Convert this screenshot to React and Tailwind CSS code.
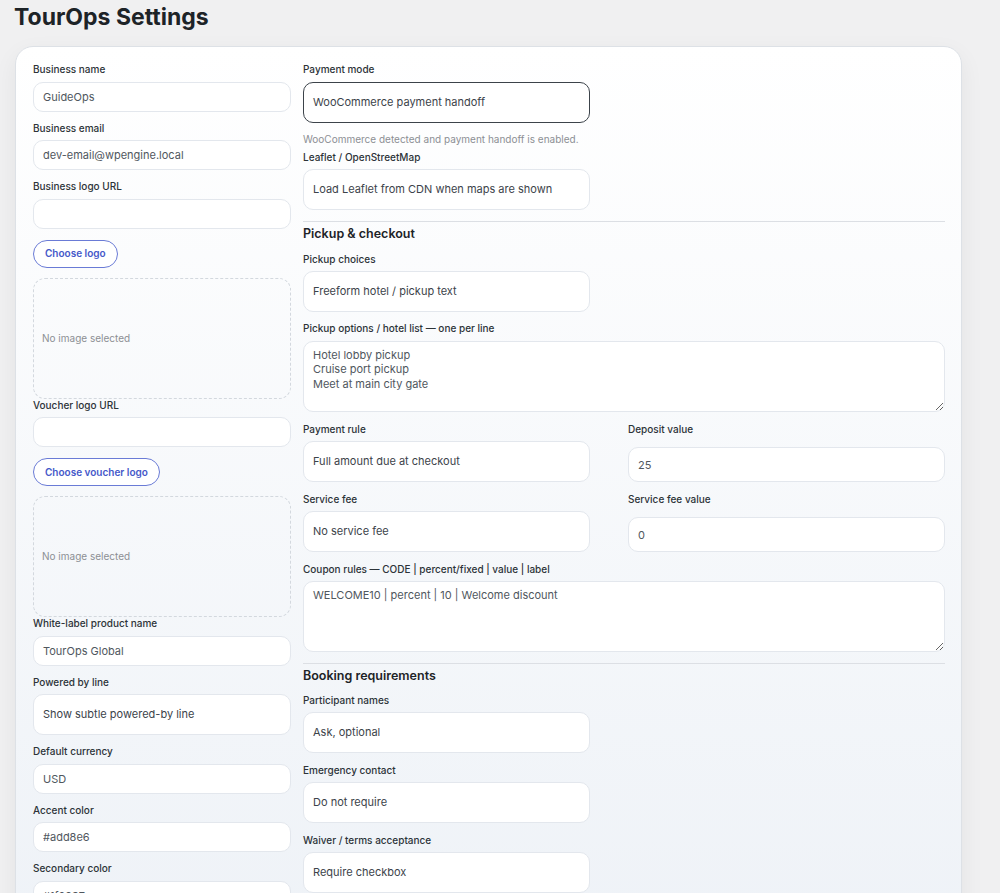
import clsx from 'clsx';

const FONT = "font-['Inter',sans-serif]";

const LEFT_ROWS = [
  { label: 'Business name', value: 'GuideOps' },
  { label: 'Business email', value: 'dev-email@wpengine.local' },
  { label: 'Business logo URL', value: '' },
];

function Label({ children, className }) {
  return (
    <label className={clsx('block h-[13px] text-[10px] leading-[13px] font-medium text-[#2c3338] mb-[5.5px] whitespace-nowrap', className)}>
      {children}
    </label>
  );
}

function TextInput({ value, className }) {
  return (
    <input
      readOnly
      value={value}
      className={clsx(
        'block w-full h-[30px] rounded-[10px] border border-[#e3e7ed] bg-white px-[9px] text-[11px] text-[#50575e] outline-none',
        className
      )}
    />
  );
}

function Select({ value, wide = false, active = false, className }) {
  return (
    <div
      className={clsx(
        'flex items-center h-[41px] rounded-[10px] border bg-white px-[9px] text-[11px] text-[#3c434a]',
        wide ? 'w-full' : 'w-[287px]',
        active ? 'border-[#3c434a]' : 'border-[#e3e7ed]',
        className
      )}
    >
      {value}
    </div>
  );
}

function TextArea({ value, className }) {
  return (
    <textarea
      readOnly
      value={value}
      className={clsx(
        'block w-full h-[71px] rounded-[10px] border border-[#e3e7ed] bg-white px-[9px] py-[6px] text-[11px] leading-[14.5px] text-[#50575e] outline-none',
        className
      )}
    />
  );
}

function LogoPicker({ button }) {
  return (
    <>
      <button className="self-start h-[28px] mt-[1px] px-[11px] rounded-full border border-[#6a7bd6] bg-white text-[10px] font-semibold text-[#4558c9]">
        {button}
      </button>
      <div className="mt-[10px] h-[121px] rounded-[12px] border border-dashed border-[#d3d8de] flex items-center px-[8px] text-[10px] text-[#8c8f94]">
        No image selected
      </div>
    </>
  );
}

function SectionTitle({ children }) {
  return (
    <>
      <div className="h-px bg-[#dcdfe4]" />
      <h2 className="mt-[4px] h-[16px] text-[12.5px] leading-[16px] font-semibold text-[#1d2327]">{children}</h2>
    </>
  );
}

function Field({ label, children }) {
  return (
    <div className="mb-[10px]">
      <Label>{label}</Label>
      {children}
    </div>
  );
}

export default function App() {
  return (
    <div className={clsx(FONT, 'min-h-screen bg-[#f0f0f1] pb-10')}>
      <h1 className="pl-[14px] pt-[2px] h-[46px] text-[23px] leading-[30px] font-bold text-[#1d2327]">
        TourOps Settings
      </h1>

      <div className="ml-[15px] w-[947px] rounded-[18px] border border-[#dde1e6] bg-gradient-to-b from-white to-[#eef2f7] shadow-[0_8px_24px_rgba(0,0,0,0.06)] pt-[16px] pl-[17px] pr-[16px] pb-6">
        <div className="grid grid-cols-[258px_1fr] gap-x-[12px]">
          {/* Left column */}
          <div className="flex flex-col">
            {LEFT_ROWS.map((row) => (
              <Field key={row.label} label={row.label}>
                <TextInput value={row.value} />
              </Field>
            ))}
            <LogoPicker button="Choose logo" />

            <Label>Voucher logo URL</Label>
            <TextInput value="" className="mb-[10px]" />
            <LogoPicker button="Choose voucher logo" />

            <Field label="White-label product name">
              <TextInput value="TourOps Global" />
            </Field>
            <Field label="Powered by line">
              <Select value="Show subtle powered-by line" wide />
            </Field>
            <Field label="Default currency">
              <TextInput value="USD" />
            </Field>
            <Field label="Accent color">
              <TextInput value="#add8e6" />
            </Field>
            <Field label="Secondary color">
              <TextInput value="#1f2937" />
            </Field>
          </div>

          {/* Right column */}
          <div className="flex flex-col">
            <Label>Payment mode</Label>
            <Select value="WooCommerce payment handoff" active />
            <p className="mt-[10.5px] h-[13px] text-[10px] leading-[13px] text-[#8c8f94] mb-[4.5px]">
              WooCommerce detected and payment handoff is enabled.
            </p>
            <Label>Leaflet / OpenStreetMap</Label>
            <Select value="Load Leaflet from CDN when maps are shown" className="mb-[10.5px]" />

            <SectionTitle>Pickup &amp; checkout</SectionTitle>

            <Label className="mt-[11px]">Pickup choices</Label>
            <Select value="Freeform hotel / pickup text" className="mb-[10px]" />

            <Label>Pickup options / hotel list — one per line</Label>
            <TextArea value={'Hotel lobby pickup\nCruise port pickup\nMeet at main city gate'} className="mb-[11px]" />

            <div className="grid grid-cols-2 gap-x-[8px]">
              <div className="mb-[10.5px]">
                <Label>Payment rule</Label>
                <Select value="Full amount due at checkout" />
              </div>
              <div className="mb-[10.5px]">
                <Label className="mb-[11.5px]">Deposit value</Label>
                <TextInput value="25" className="h-[35px]" />
              </div>
              <div className="mb-[10.5px]">
                <Label>Service fee</Label>
                <Select value="No service fee" />
              </div>
              <div className="mb-[10.5px]">
                <Label className="mb-[11.5px]">Service fee value</Label>
                <TextInput value="0" className="h-[35px]" />
              </div>
            </div>

            <Label>Coupon rules — CODE | percent/fixed | value | label</Label>
            <TextArea value="WELCOME10 | percent | 10 | Welcome discount" className="mb-[10.5px]" />

            <SectionTitle>Booking requirements</SectionTitle>

            <Label className="mt-[10px]">Participant names</Label>
            <Select value="Ask, optional" className="mb-[10.5px]" />
            <Label>Emergency contact</Label>
            <Select value="Do not require" className="mb-[10.5px]" />
            <Label>Waiver / terms acceptance</Label>
            <Select value="Require checkbox" className="mb-[10.5px]" />
          </div>
        </div>
      </div>
    </div>
  );
}
